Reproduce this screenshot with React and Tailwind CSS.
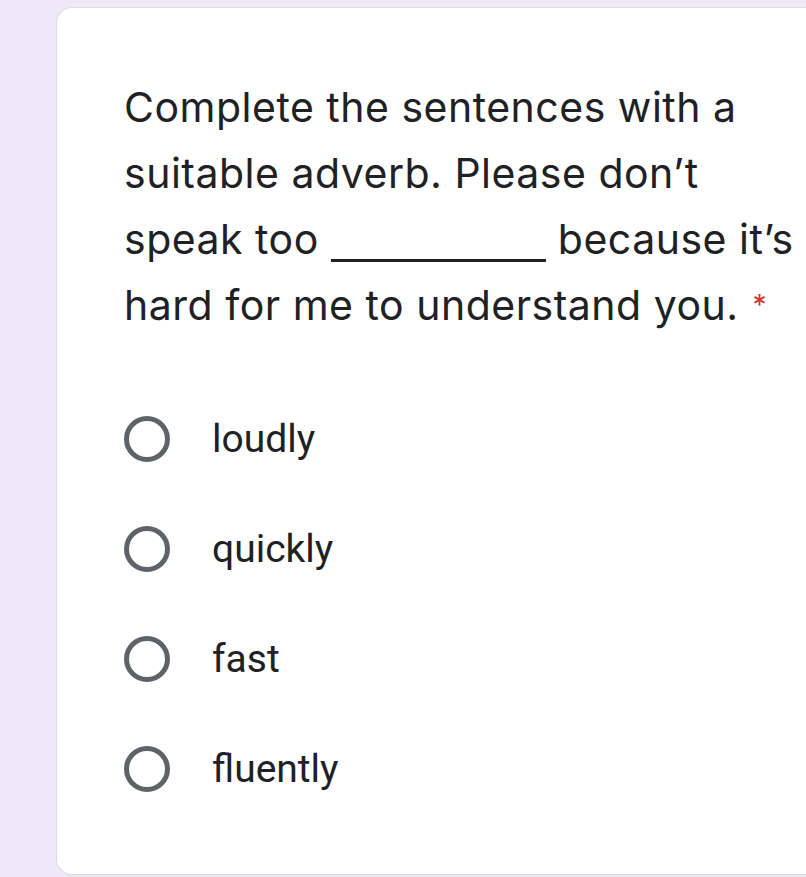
const options = ['loudly', 'quickly', 'fast', 'fluently']

export default function App() {
  return (
    <div className="h-[877px] w-[806px] overflow-hidden bg-[#ede9f7] pl-[56px] pt-[7px]">
      <div className="h-[868px] rounded-l-[16px] rounded-r-none border border-r-0 border-[#dcdce0] bg-white pl-[67px] pt-[66px]">
        <p className="whitespace-nowrap text-[41px] leading-[66px] tracking-[0.5px] text-[#202124]" style={{ fontFamily: 'Inter, Roboto, sans-serif' }}>
          Complete the sentences with a
          <br />
          suitable adverb. Please don’t
          <br />
          speak too{' '}
          <span className="inline-block w-[215px] border-b-[3px] border-[#202124] align-[-8px]"></span>{' '}
          because it’s
          <br />
          hard for me to understand you.
          <span className="ml-[14px] align-top text-[28px] text-[#d93025]">*</span>
        </p>
        <div className="mt-[78px] flex flex-col gap-[64px]">
          {options.map((opt) => (
            <div key={opt} className="flex h-[46px] items-center">
              <span className="box-border h-[46px] w-[46px] rounded-full border-[5px] border-[#5f6368]"></span>
              <span className="ml-[42px] text-[39px] text-[#202124]" style={{ fontFamily: 'Roboto, sans-serif' }}>
                {opt}
              </span>
            </div>
          ))}
        </div>
      </div>
    </div>
  )
}
